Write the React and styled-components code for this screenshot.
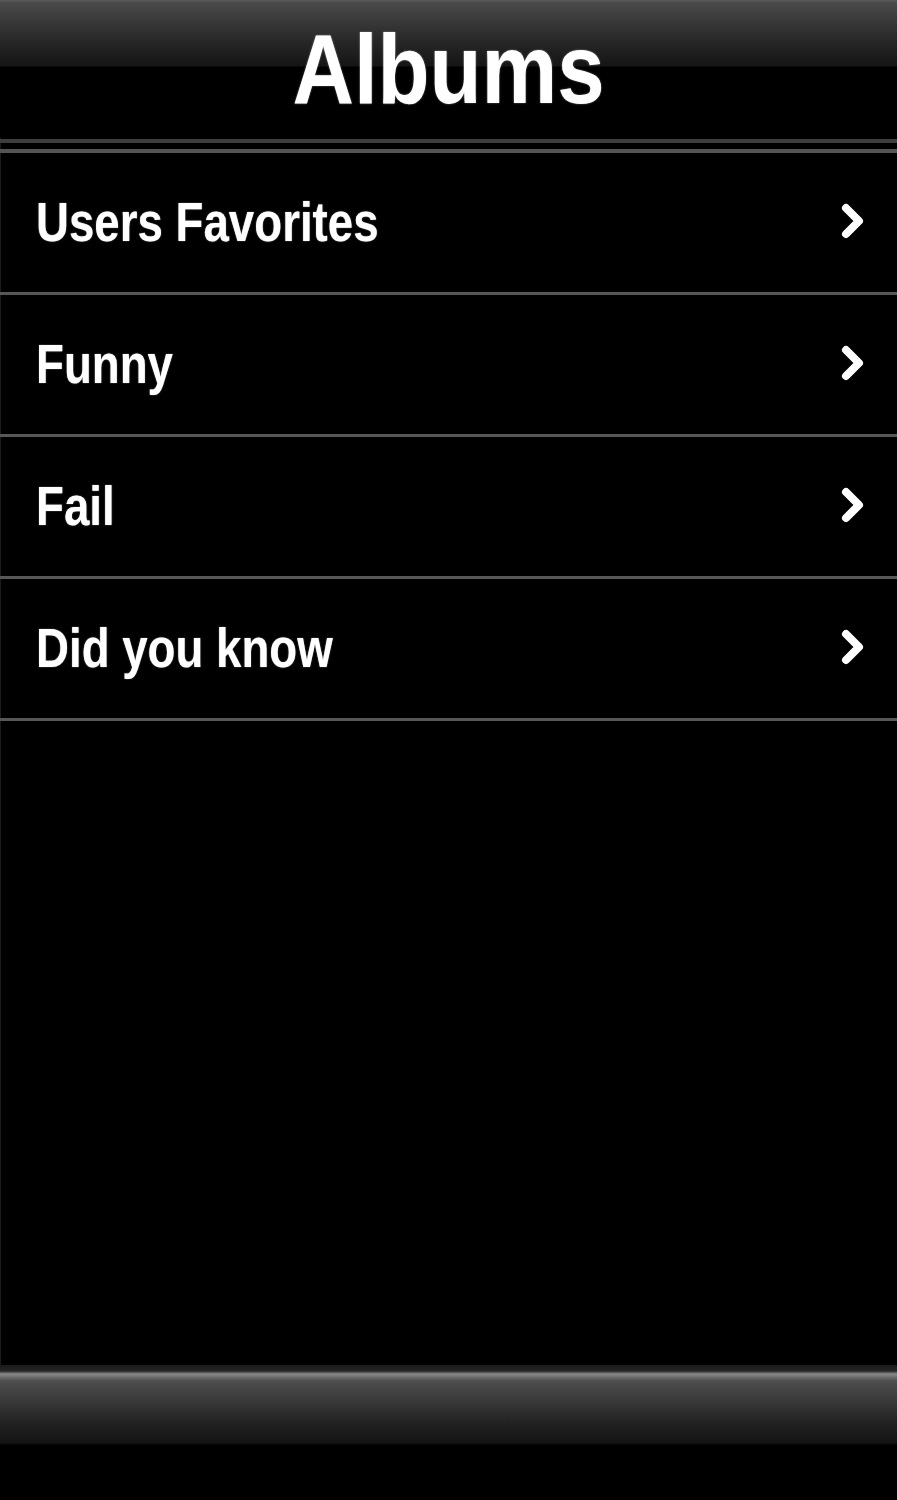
import React from "react";
import styled, { createGlobalStyle } from "styled-components";

const GlobalStyle = createGlobalStyle`
  html, body {
    margin: 0;
    padding: 0;
    background: #000;
  }
  body {
    font-family: "Liberation Sans", Arial, sans-serif;
  }
`;

const Page = styled.div`
  width: 897px;
  min-height: 1500px;
  display: flex;
  flex-direction: column;
  background: #000;
  box-shadow: inset 1px 0 0 #1c1c1c;
`;

const Header = styled.header`
  height: 138px;
  box-sizing: border-box;
  padding-top: 19px;
  display: flex;
  justify-content: center;
  align-items: flex-start;
  background: linear-gradient(
    to bottom,
    #5a5a5a 0px,
    #4a4a4a 3px,
    #3c3c3c 18px,
    #242424 45px,
    #151515 66px,
    #000 67px,
    #000 100%
  );
`;

const Title = styled.h1`
  margin: 0;
  font-size: 99px;
  line-height: 99px;
  font-weight: 700;
  color: #fff;
  transform: scaleX(0.86);
  text-shadow: 0 0 2px rgba(255, 255, 255, 0.5);
`;

const Rule = styled.div`
  height: ${(p) => p.$h}px;
  margin-top: ${(p) => p.$gap}px;
  background: ${(p) => p.$color};
`;

const List = styled.ul`
  list-style: none;
  margin: 0;
  padding: 0;
  display: flex;
  flex-direction: column;
`;

const Row = styled.li`
  height: 142px;
  box-sizing: border-box;
  border-bottom: 3px solid #575757;
  display: flex;
  align-items: center;
  justify-content: space-between;
  padding: 0 30px 2px 36px;
`;

const Label = styled.span`
  font-size: 55px;
  line-height: 56px;
  font-weight: 700;
  color: #fff;
  transform: scaleX(0.83);
  transform-origin: left center;
  white-space: nowrap;
  text-shadow: 0 0 1.5px rgba(255, 255, 255, 0.6);
`;

const Chevron = styled.svg`
  width: 32px;
  height: 42px;
  display: block;
`;

const Spacer = styled.div`
  flex: 1;
`;

const Footer = styled.footer`
  height: 135px;
  background: linear-gradient(
    to bottom,
    #1a1a1a 0px,
    #262626 6px,
    #8a8a8a 9px,
    #6e6e6e 12px,
    #4e4e4e 16px,
    #3a3a3a 35px,
    #222 58px,
    #141414 78px,
    #000 80px,
    #000 100%
  );
`;

const items = ["Users Favorites", "Funny", "Fail", "Did you know"];

export default function App() {
  return (
    <>
      <GlobalStyle />
      <Page>
        <Header>
          <Title>Albums</Title>
        </Header>
        <Rule $h={4} $gap={1} $color="#3e3e3e" />
        <Rule $h={4} $gap={6} $color="#555" />
        <List>
          {items.map((t) => (
            <Row key={t}>
              <Label>{t}</Label>
              <Chevron viewBox="0 0 32 42">
                <polyline
                  points="11,7 24,20 11,33"
                  fill="none"
                  stroke="#fff"
                  strokeWidth="8"
                  strokeLinecap="round"
                  strokeLinejoin="round"
                />
              </Chevron>
            </Row>
          ))}
        </List>
        <Spacer />
        <Footer />
      </Page>
    </>
  );
}
